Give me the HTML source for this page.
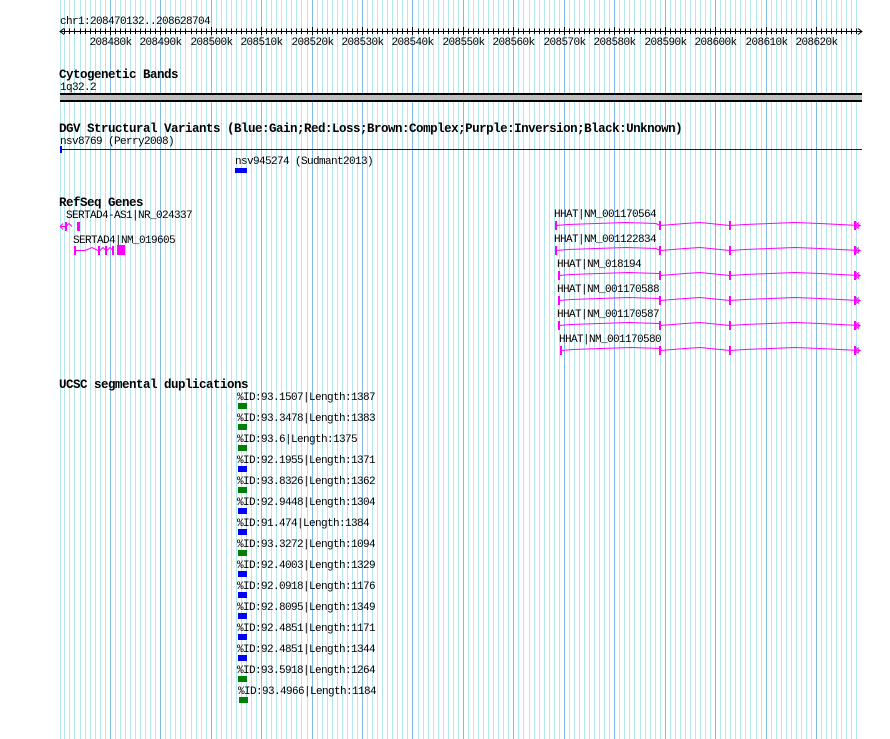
<!DOCTYPE html>
<html><head><meta charset="utf-8"><style>
html,body{margin:0;padding:0;background:#fff;width:890px;height:739px;overflow:hidden}
svg{display:block}
text{font-family:"Liberation Mono",monospace;font-size:11px;letter-spacing:-0.6px;fill:#000}
.b{font-weight:bold;font-size:12.5px;letter-spacing:-0.5px}
</style></head><body>
<svg id="s" width="890" height="739" xmlns="http://www.w3.org/2000/svg">
<g id="grid"></g>
<text x="60" y="24">chr1:208470132..208628704</text>
<g id="ruler"></g>
<text class="b" x="59" y="78">Cytogenetic Bands</text>
<text x="60" y="90">1q32.2</text>
<rect x="60" y="93" width="802" height="9" fill="#000"/>
<rect x="60" y="95" width="802" height="5" fill="#bebebe"/>
<text class="b" x="59" y="132">DGV Structural Variants (Blue:Gain;Red:Loss;Brown:Complex;Purple:Inversion;Black:Unknown)</text>
<text x="60" y="144">nsv8769 (Perry2008)</text>
<line x1="60" y1="149.5" x2="862" y2="149.5" stroke="#0000ff" stroke-width="1"/>
<rect x="60" y="146" width="2" height="7" fill="#0000ff"/>
<text x="235" y="164">nsv945274 (Sudmant2013)</text>
<rect x="235" y="168" width="12" height="5" fill="#0000ff"/>
<text class="b" x="59" y="206">RefSeq Genes</text>
<text x="66" y="218">SERTAD4-AS1|NR_024337</text>
<g stroke="#ff00ff" fill="none" stroke-width="1">
<path d="M60 226.5H66M60 226.5l3-3M60 226.5l3 3M66 226.5l3-3 3 3"/>
</g>
<rect x="65" y="222" width="2" height="9" fill="#ff00ff"/>
<rect x="77" y="222" width="3" height="9" fill="#ff00ff"/>
<text x="73" y="243">SERTAD4|NM_019605</text>
<g stroke="#ff00ff" fill="none" stroke-width="1">
<path d="M75 250.5H85l7-3 6 3M100 250.5l3-3 3 3M107 250.5l3-3 3 3"/>
</g>
<rect x="74" y="246" width="2" height="9" fill="#ff00ff"/>
<rect x="98" y="246" width="2" height="9" fill="#ff00ff"/>
<rect x="105" y="246" width="2" height="9" fill="#ff00ff"/>
<rect x="112" y="246" width="2" height="9" fill="#ff00ff"/>
<rect x="117" y="245" width="8" height="10" fill="#ff00ff"/>
<g id="hhat"></g>
<text class="b" x="59" y="388">UCSC segmental duplications</text>
<g id="seg"></g>
</svg>
<script>
var NS="http://www.w3.org/2000/svg";
function el(p,t,a,txt){var e=document.createElementNS(NS,t);for(var k in a)e.setAttribute(k,a[k]);if(txt)e.textContent=txt;document.getElementById(p).appendChild(e);return e;}
var sc=0.0050450;
function X(bp){return 60+(bp-208470132)*sc;}
el("grid","line",{x1:60.5,y1:0,x2:60.5,y2:739,stroke:"#b4e8ee","stroke-width":1});
for(var k=208471;k<=208628;k++){var x=Math.round(X(k*1000))+0.5;var maj=(k%10==0);
el("grid","line",{x1:x,y1:0,x2:x,y2:739,stroke:maj?"#80bce8":"#b4e8ee","stroke-width":1});
el("ruler","line",{x1:x,y1:maj?27:28.5,x2:x,y2:maj?35:34,stroke:"#000","stroke-width":1});
if(maj)el("ruler","text",{x:x,y:45,"text-anchor":"middle"},k+"k");}
el("ruler","line",{x1:60,y1:31.5,x2:862,y2:31.5,stroke:"#000","stroke-width":1});
el("ruler","path",{d:"M64 28.5L60 31.5L64 34.5M858 28.5L862 31.5L858 34.5",stroke:"#000",fill:"none","stroke-width":1});
var rows=[[554,556,"HHAT|NM_001170564"],[554,556,"HHAT|NM_001122834"],[557,559,"HHAT|NM_018194"],[557,559,"HHAT|NM_001170588"],[557,559,"HHAT|NM_001170587"],[559,561,"HHAT|NM_001170580"]];
rows.forEach(function(r,i){var ly=217+i*25,y=225.5+i*25;
el("hhat","text",{x:r[0],y:ly},r[2]);
var s=r[1];
var d="M"+s+" "+y+" L"+(s+12)+" "+(y-1)+" L"+(s+40)+" "+(y-2)+" L"+(s+70)+" "+(y-3)+" L"+(s+100)+" "+(y-2)+" L660 "+y+" M660 "+y+" L685 "+(y-2)+" L700 "+(y-3)+" L730 "+y+" L745 "+(y-1)+" L770 "+(y-2)+" L795 "+(y-3)+" L820 "+(y-2)+" L860 "+y+" l-4 -3 M860 "+y+" l-4 3 M855 "+y+" l4 -3 M855 "+y+" l4 3";
el("hhat","path",{d:d,stroke:"#ff00ff",fill:"none","stroke-width":1});
[s,660,730,855].forEach(function(ex){el("hhat","rect",{x:ex-1,y:y-4.5,width:2,height:9,fill:"#ff00ff"});});
});
var segs=[["93.1507","1387","g"],["93.3478","1383","g"],["93.6","1375","g"],["92.1955","1371","b"],["93.8326","1362","g"],["92.9448","1304","b"],["91.474","1384","b"],["93.3272","1094","g"],["92.4003","1329","b"],["92.0918","1176","b"],["92.8095","1349","b"],["92.4851","1171","b"],["92.4851","1344","b"],["93.5918","1264","g"],["93.4966","1184","g"]];
segs.forEach(function(s,i){var y=400+i*21;var x=i==14?239:238;
el("seg","text",{x:x-1,y:y},"%ID:"+s[0]+"|Length:"+s[1]);
el("seg","rect",{x:x,y:y+3,width:9,height:6,fill:s[2]=="g"?"#008000":"#0000ff"});});
</script>
</body></html>
